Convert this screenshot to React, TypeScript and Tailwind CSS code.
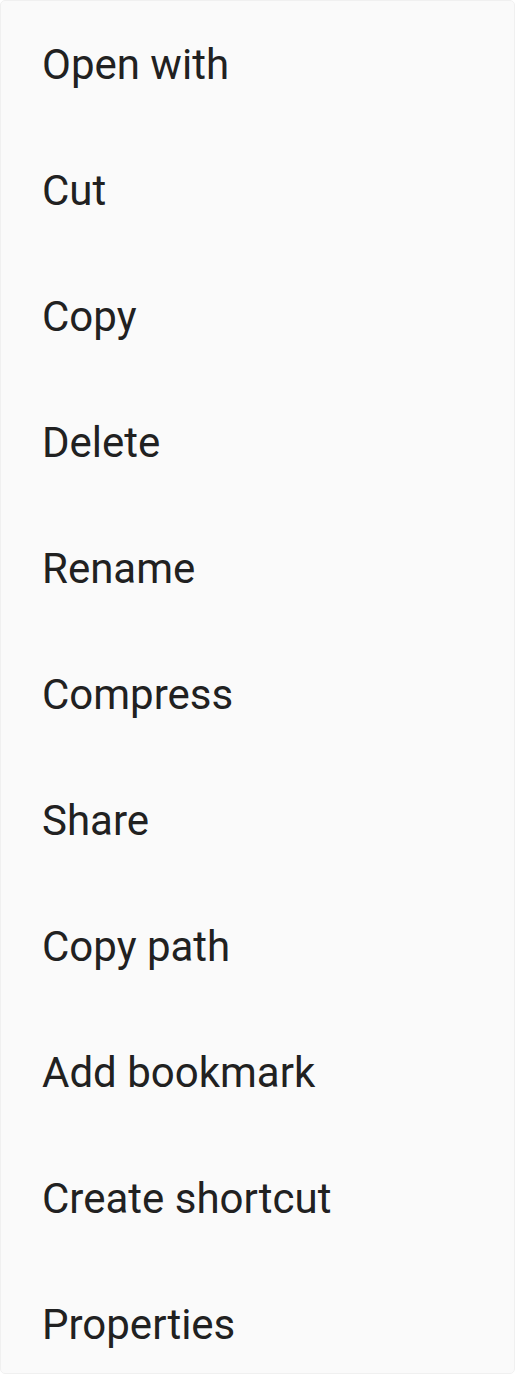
const items = [
  'Open with',
  'Cut',
  'Copy',
  'Delete',
  'Rename',
  'Compress',
  'Share',
  'Copy path',
  'Add bookmark',
  'Create shortcut',
  'Properties',
]

export default function App() {
  return (
    <div className="w-[515px] h-[1374px] overflow-hidden bg-white">
      <div className="h-full overflow-hidden rounded-[5px] border border-[#f0f0f0] bg-[#fafafa] font-['Roboto',sans-serif] text-[#212121]">
        <ul className="pt-px">
          {items.map((label) => (
            <li
              key={label}
              className="flex h-[126px] items-center pl-[41px] text-[42px] leading-none"
            >
              {label}
            </li>
          ))}
        </ul>
      </div>
    </div>
  )
}
